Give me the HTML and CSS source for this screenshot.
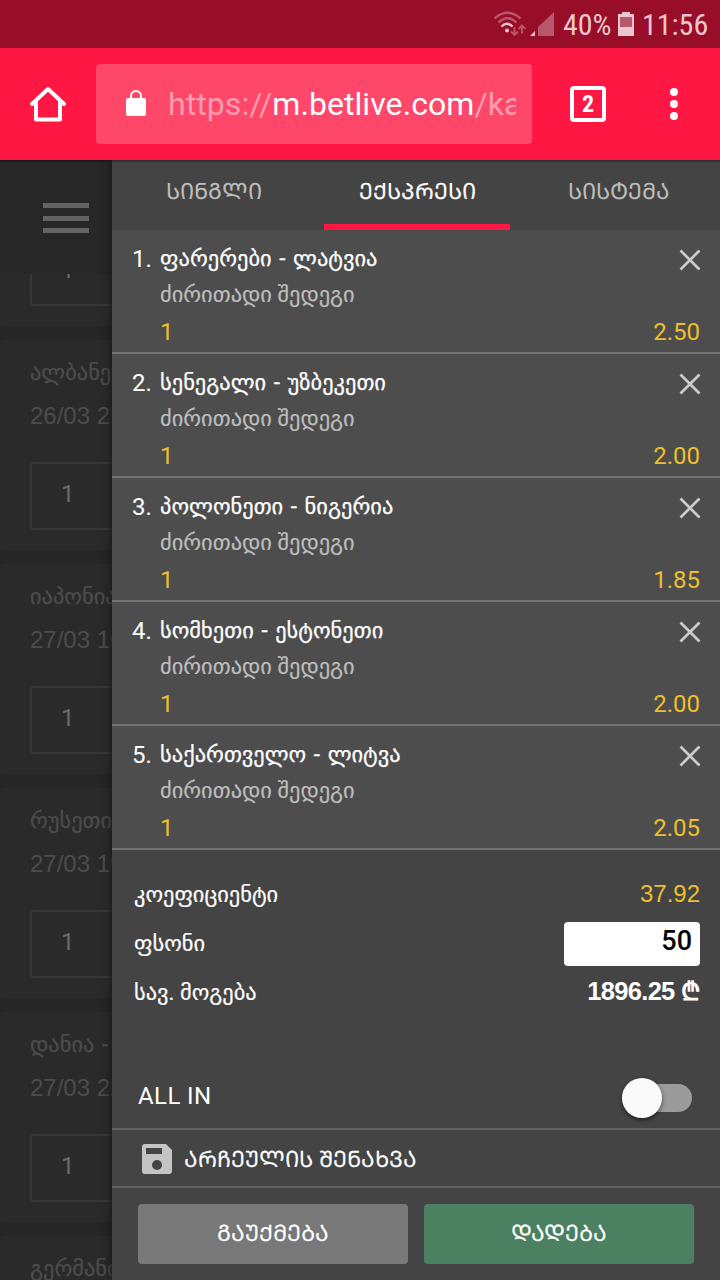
FILE: index.html
```html
<!DOCTYPE html>
<html lang="ka">
<head>
<meta charset="utf-8">
<title>Betlive</title>
<link rel="stylesheet" href="styles.css">
</head>
<body>
<div class="statusbar">
  <svg class="signals" width="64" height="30" viewBox="0 0 64 30">
    <g fill="none" stroke="#b8566b" stroke-width="2.4">
      <path d="M.5 9.500Q13.500-2 26.500 9.500"/><path d="M4.500 13.500Q13.500 5 22.500 13.500"/>
      <path d="M20.500 18v7.500M17 22.500l3.500 3.500 3.500-3.500M28 24.500v-7.500M24.500 20l3.500-3.500 3.500 3.500" stroke-width="1.900"/>
    </g>
    <path d="M7.500 17.500Q13 12 18.500 17.500" fill="none" stroke="#ecc6cf" stroke-width="2.400"/>
    <circle cx="13" cy="21.500" r="2" fill="#ecc6cf"/>
    <path d="M36 27l5-5v5z" fill="#ecc6cf"/><path d="M44 27V18L60 3V27z" fill="#b8566b"/>
  </svg>
  <span class="percent">40%</span>
  <svg class="battery" width="16" height="24" viewBox="0 0 16 24"><path d="M4 0h8v2h4v22H0V2h4z" fill="#ecc6cf"/><path d="M2 5h12v10H2z" fill="#b8566b"/></svg>
  <span class="clock">11:56</span>
</div>
<div class="toolbar">
  <svg class="home" width="38" height="38" viewBox="0 0 38 38"><path d="M3 19L19 4l16 15M7 17v17.500h24V17" fill="none" stroke="#fff" stroke-width="4" stroke-linejoin="round" stroke-linecap="round"/></svg>
  <div class="address">
    <svg class="lock" width="20" height="26" viewBox="0 0 20 26"><rect y="8" width="20" height="18" rx="2" fill="#fff"/><path d="M5 9V6a5 5 0 0110 0v3" fill="none" stroke="#fff" stroke-width="2"/></svg>
    <div class="url">https://<b>m.betlive.com</b>/ka</div>
  </div>
  <div class="tabcount">2</div>
  <svg class="more" width="8" height="32" viewBox="0 0 8 32"><g fill="#fff"><circle cx="4" cy="4" r="4"/><circle cx="4" cy="16" r="4"/><circle cx="4" cy="28" r="4"/></g></svg>
</div>
<div class="page">
  <div class="matches">
    <div class="menu"><i></i><i></i><i></i></div>
    <div class="match cut"><div class="odd">1</div></div>
    <div class="match"><p class="teams">ალბანე</p><p class="date">26/03 2</p><div class="odd">1</div></div>
    <div class="match"><p class="teams">იაპონია</p><p class="date">27/03 16</p><div class="odd">1</div></div>
    <div class="match"><p class="teams">რუსეთი</p><p class="date">27/03 19</p><div class="odd">1</div></div>
    <div class="match"><p class="teams">დანია -</p><p class="date">27/03 22</p><div class="odd">1</div></div>
    <div class="match"><p class="teams">გერმანი</p></div>
  </div>
  <div class="slip">
    <div class="tabs"><div class="tab first">ᲡᲘᲜᲒᲚᲘ</div><div class="tab active">ᲔᲥᲡᲞᲠᲔᲡᲘ</div><div class="tab last">ᲡᲘᲡᲢᲔᲛᲐ</div></div>
    <div class="bet"><span class="num">1.</span><div class="info"><p class="name">ფარერები - ლატვია</p><p class="market">ძირითადი შედეგი</p><p class="pick">1</p></div><div class="side"><svg class="close" width="22" height="22" viewBox="0 0 22 22"><path d="M1.500 1.500l19 19M20.500 1.500l-19 19"/></svg><span>2.50</span></div></div>
    <div class="bet"><span class="num">2.</span><div class="info"><p class="name">სენეგალი - უზბეკეთი</p><p class="market">ძირითადი შედეგი</p><p class="pick">1</p></div><div class="side"><svg class="close" width="22" height="22" viewBox="0 0 22 22"><path d="M1.500 1.500l19 19M20.500 1.500l-19 19"/></svg><span>2.00</span></div></div>
    <div class="bet"><span class="num">3.</span><div class="info"><p class="name">პოლონეთი - ნიგერია</p><p class="market">ძირითადი შედეგი</p><p class="pick">1</p></div><div class="side"><svg class="close" width="22" height="22" viewBox="0 0 22 22"><path d="M1.500 1.500l19 19M20.500 1.500l-19 19"/></svg><span>1.85</span></div></div>
    <div class="bet"><span class="num">4.</span><div class="info"><p class="name">სომხეთი - ესტონეთი</p><p class="market">ძირითადი შედეგი</p><p class="pick">1</p></div><div class="side"><svg class="close" width="22" height="22" viewBox="0 0 22 22"><path d="M1.500 1.500l19 19M20.500 1.500l-19 19"/></svg><span>2.00</span></div></div>
    <div class="bet"><span class="num">5.</span><div class="info"><p class="name">საქართველო - ლიტვა</p><p class="market">ძირითადი შედეგი</p><p class="pick">1</p></div><div class="side"><svg class="close" width="22" height="22" viewBox="0 0 22 22"><path d="M1.500 1.500l19 19M20.500 1.500l-19 19"/></svg><span>2.05</span></div></div>
    <div class="totals">
      <div class="line"><span class="geo">კოეფიციენტი</span><span class="coef">37.92</span></div>
      <div class="line"><span class="geo">ფსონი</span><span class="stake">50</span></div>
      <div class="line"><span class="geo">სავ. მოგება</span><span class="win">1896.25 <span class="lari">₾</span></span></div>
    </div>
    <div class="allin"><span>ALL IN</span><div class="switch"><div class="knob"></div></div></div>
    <div class="save"><svg width="30" height="30" viewBox="0 0 30 30"><path fill-rule="evenodd" fill="#c4c4c4" d="M3 0H24L30 6V27a3 3 0 01-3 3H3a3 3 0 01-3-3V3a3 3 0 013-3zM4 4V10H20V4zM15 16a5 5 0 100 10 5 5 0 000-10z"/></svg><span>ᲐᲠᲩᲔᲣᲚᲘᲡ ᲨᲔᲜᲐᲮᲕᲐ</span></div>
    <div class="actions"><div class="btn">ᲒᲐᲣᲥᲛᲔᲑᲐ</div><div class="btn ok">ᲓᲐᲓᲔᲑᲐ</div></div>
  </div>
</div>
</body>
</html>
```
FILE: styles.css
```css
* { box-sizing: border-box; }
body { margin: 0; width: 720px; height: 1280px; overflow: hidden; background: #262626; font: 24px/36px Roboto, "DejaVu Sans", sans-serif; color: #fff; }
p { margin: 0; }
.statusbar { height: 48px; background: #980d27; color: #ecc6cf; display: flex; align-items: center; padding-left: 494px; font: 30px/46px "Roboto Condensed", Roboto, sans-serif; white-space: nowrap; }
.signals { margin-right: 5px; flex: none; }
.percent, .clock { padding-top: 2px; }
.percent { width: 55px; }
.battery { flex: none; margin-right: 8px; }
.toolbar { height: 112px; background: #ff1744; display: flex; align-items: center; padding-left: 29px; }
.home { flex: none; }
.address { margin-left: 29px; width: 436px; height: 80px; border-radius: 4px; background: #ff476a; display: flex; align-items: center; padding-left: 30px; }
.lock { margin-bottom: 2px; }
.url { margin-left: 22px; width: 348px; overflow: hidden; white-space: nowrap; font-size: 32px; letter-spacing: .07px; line-height: 48px; color: #ff9db0; }
.url b { font-weight: 400; color: #fff; }
.tabcount { margin-left: 38px; width: 36px; height: 36px; border: 4px solid #fff; border-radius: 4px; font: 700 24px/29px "Roboto Condensed", Roboto, sans-serif; text-align: center; }
.more { margin-left: 64px; }
.page { height: 1120px; display: flex; overflow: hidden; position: relative; }
.page::after { content: ""; position: absolute; inset: 0 0 auto; height: 3px; background: linear-gradient(#0006, #0000); }
.matches { width: 112px; overflow: hidden; }
.menu { height: 114px; background: #272727; padding: 43px 0 0 43px; }
.menu i { display: block; width: 46px; height: 5px; margin-bottom: 7.500px; background: #636363; }
.match { height: 210px; width: 680px; margin-bottom: 14px; padding: 14px 30px; background: #2a2a2a; border-radius: 4px; color: #4c4c4c; }
.match.cut { height: 52px; padding-top: 0; border-radius: 0 0 4px 4px; overflow: hidden; }
.match .odd { font-family: Roboto, sans-serif; }
.match.cut .odd { margin-top: -36px; }
.teams { font-size: 22.400px; line-height: 36px; word-spacing: 2px; white-space: nowrap; -webkit-text-stroke: .25px; }
.date { font: 24px/36px "Liberation Sans", sans-serif; margin-top: 8px; white-space: nowrap; }
.odd { margin-top: 28px; width: 300px; height: 68px; padding: 12px 29px; border: 2px solid #373737; border-radius: 4px; color: #6a6a6a; }
.slip { width: 608px; background: #444; box-shadow: 0 0 10px #151515; position: relative; }
.tabs { height: 70px; display: grid; grid-template-columns: 212px 186px 210px; color: #bdbdbd; font-size: 22.400px; line-height: 63px; text-align: center; -webkit-text-stroke: .1px; }
.first { padding-right: 8px; }
.last { padding-left: 6px; }
.active { color: #fff; border-bottom: 6px solid #ff1744; }
.bet { height: 124px; background: #4d4d4d; border-bottom: 2px solid #737373; display: flex; padding: 10px 20px 0; }
.num { width: 28px; line-height: 38px; }
.info { flex: 1; }
.name, .market, .pick { height: 36px; white-space: nowrap; }
.name, .market { font-size: 22.400px; }
.name { word-spacing: 2px; letter-spacing: .03px; -webkit-text-stroke: .25px; }
.market { color: #bdbdbd; -webkit-text-stroke: .2px; }
.pick { line-height: 41px; color: #efbe2d; }
.side { display: flex; flex-direction: column; justify-content: space-between; align-items: flex-end; padding: 9px 0 2px; color: #efbe2d; }
.close { fill: none; stroke: #ccc; stroke-width: 2.700; margin-right: -1px; }
.totals { padding: 19px 20px 0 22px; }
.line { height: 49px; display: flex; justify-content: space-between; align-items: center; }
.geo { font-size: 22.400px; -webkit-text-stroke: .2px; }
.coef { color: #efbe2d; font-family: "Liberation Sans", sans-serif; }
.stake { width: 136px; height: 44px; margin-top: 2px; background: #fff; border-radius: 4px; color: #000; text-align: right; padding-right: 8px; font-size: 27px; font-weight: 500; line-height: 38px; }
.win { font-family: "Liberation Sans", "DejaVu Sans", sans-serif; font-weight: 700; font-size: 25.500px; letter-spacing: -.7px; padding-bottom: 1px; }
.lari { font-size: 25px; letter-spacing: 0; }
.allin { height: 114px; padding: 62px 28px 0 26px; display: flex; justify-content: space-between; border-bottom: 2px solid #606060; letter-spacing: .4px; }
.switch { display: flex; align-items: center; width: 70px; height: 28px; border-radius: 14px; background: #9b9b9b; margin-top: 6px; }
.knob { flex: none; width: 40px; height: 40px; border-radius: 50%; background: #fafafa; box-shadow: 0 2px 4px #0008; }
.save { height: 58px; border-bottom: 2px solid #606060; display: flex; align-items: center; padding: 2px 0 0 30px; gap: 12px; font-size: 22.600px; -webkit-text-stroke: .1px; }
.save span { padding-top: 2px; }
.actions { display: grid; grid-template-columns: 270px 270px; gap: 16px; padding: 16px 26px; font-size: 22.700px; -webkit-text-stroke: .1px; }
.btn { height: 60px; border-radius: 4px; background: #787878; text-align: center; line-height: 59px; }
.ok { background: #4b8160; }
```
